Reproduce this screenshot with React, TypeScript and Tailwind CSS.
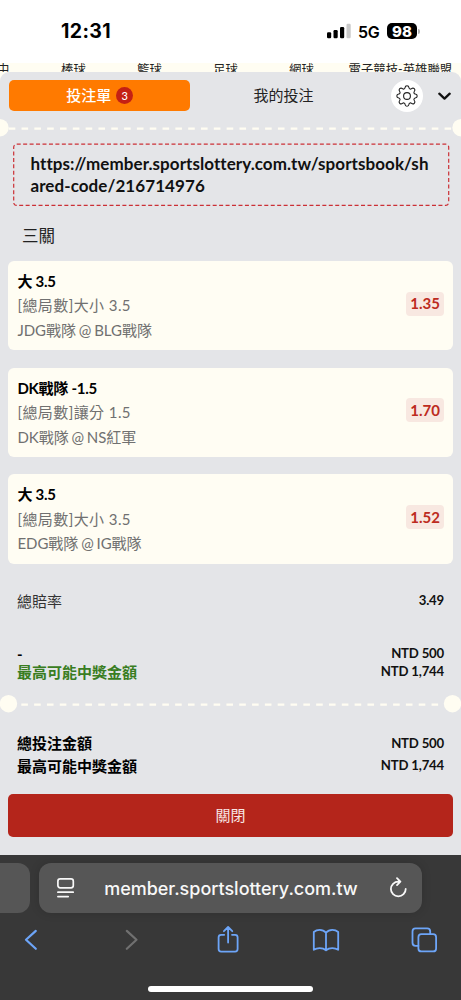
import React from "react";

const leagues = [
  { label: "中", cls: "left-[-3px]" },
  { label: "棒球", cls: "left-[61px]" },
  { label: "籃球", cls: "left-[137px]" },
  { label: "足球", cls: "left-[213px]" },
  { label: "網球", cls: "left-[289px]" },
  { label: "電子競技-英雄聯盟", cls: "left-[348.5px]" },
];

const bets = [
  { pick: "大 3.5", market: "[總局數]大小 3.5", match: "JDG戰隊 @ BLG戰隊", odds: "1.35" },
  { pick: "DK戰隊 -1.5", market: "[總局數]讓分 1.5", match: "DK戰隊 @ NS紅軍", odds: "1.70" },
  { pick: "大 3.5", market: "[總局數]大小 3.5", match: "EDG戰隊 @ IG戰隊", odds: "1.52" },
];

function StatusBar() {
  return (
    <div className="flex h-[63px] items-start bg-white pt-[20px] font-['Inter',sans-serif] text-black">
      <div className="ml-[61px] mt-[-1px] w-[266px] text-[19.5px] font-bold leading-[24px] tracking-[0.35px]">12:31</div>
      <svg className="mt-[3px]" width="24" height="16" viewBox="0 0 24 16">
        <rect x="0" y="9.3" width="4.2" height="6" rx="1.2" />
        <rect x="6.5" y="7" width="4.2" height="8.3" rx="1.2" />
        <rect x="13" y="4" width="4.2" height="11.3" rx="1.2" />
        <rect x="19.5" y="0.8" width="4.2" height="14.5" rx="1.2" fill="#c9c9c9" />
      </svg>
      <div className="ml-[7px] w-[22px] whitespace-nowrap text-[16px] font-semibold leading-[24px] tracking-[-0.2px]">5G</div>
      <div className="ml-[7px] mt-[3px] flex h-[16px] w-[30px] items-center justify-center rounded-[5px] bg-black text-[15px] font-extrabold leading-none text-white">98</div>
      <div className="ml-[1px] mt-[9px] h-[5px] w-[1.5px] rounded-r bg-[#b5b5b5]" />
    </div>
  );
}

function Divider({ inset }: { inset: boolean }) {
  const left = inset ? 8.5 : 0;
  return (
    <svg className="block" width="461" height="18" viewBox="0 0 461 18">
      <line x1={inset ? 21.3 : 8.7} x2={inset ? 440 : 453} y1="9.7" y2="9.7" stroke="#fffdf2" strokeWidth="2.2" strokeDasharray="6.6 6.22" />
      <circle cx={left} cy="8.7" r="8.7" fill="#fffdf2" />
      <circle cx={461 - left} cy="8.7" r="8.7" fill="#fffdf2" />
    </svg>
  );
}

function GearIcon() {
  return (
    <svg width="22" height="22" viewBox="0 0 22 22" fill="none" stroke="#222" strokeWidth="1.1" strokeLinejoin="round">
      <path d="M9 2.8Q9.2 .8 11 .8Q12.8 .8 13 2.8Q13.1 3.7 14 4Q14.8 4.3 15.5 3.7Q17 2.4 18.3 3.7Q19.6 5 18.3 6.5Q17.7 7.2 18 8Q18.3 8.9 19.2 9Q21.2 9.2 21.2 11Q21.2 12.8 19.2 13Q18.3 13.1 18 14Q17.7 14.8 18.3 15.5Q19.6 17 18.3 18.3Q17 19.6 15.5 18.3Q14.8 17.7 14 18Q13.1 18.3 13 19.2Q12.8 21.2 11 21.2Q9.2 21.2 9 19.2Q8.9 18.3 8 18Q7.2 17.7 6.5 18.3Q5 19.6 3.7 18.3Q2.4 17 3.7 15.5Q4.3 14.8 4 14Q3.7 13.1 2.8 13Q.8 12.8 .8 11Q.8 9.2 2.8 9Q3.7 8.9 4 8Q4.3 7.2 3.7 6.5Q2.4 5 3.7 3.7Q5 2.4 6.5 3.7Q7.2 4.3 8 4Q8.9 3.7 9 2.8Z" />
      <circle cx="11" cy="11" r="3.4" />
    </svg>
  );
}

function BetCard({ bet }: { bet: (typeof bets)[number] }) {
  return (
    <div className="flex h-[89.4px] items-center justify-between rounded-[6px] bg-[#fffdf3] pl-[9px] pr-[8.5px]">
      <div className="whitespace-nowrap text-[15px] leading-[24.5px] text-[#707070]">
        <div className="font-bold tracking-[-0.25px] text-black">{bet.pick}</div>
        <div className="tracking-[0.42px]">{bet.market}</div>
        <div className="tracking-[-0.02px] [word-spacing:-1px]">{bet.match}</div>
      </div>
      <div className="mt-[-4px] flex h-[24px] w-[38px] items-center justify-center rounded-[4px] bg-[#f8e8e1] text-[15px] font-bold text-[#bd2b20]">{bet.odds}</div>
    </div>
  );
}

function Row({ label, value, cls }: { label: string; value: string; cls: string }) {
  return (
    <div className={"flex items-center justify-between pl-[17px] pr-[17px] " + cls}>
      <span>{label}</span>
      <span className="text-[13.2px] font-bold tracking-[-0.2px] text-[#111]">{value}</span>
    </div>
  );
}

function Browser() {
  return (
    <div className="h-[145px] bg-[#383838] pt-[8px]">
      <div className="flex h-[50px] gap-[9px]">
        <div className="w-[30px] rounded-r-[12px] bg-[#565656]" />
        <div className="flex w-[383px] items-center rounded-[12px] bg-[#565656] text-[#f8f8f8] shadow-[0_0_10px_rgba(0,0,0,0.15)]">
          <svg className="ml-[18px]" width="18" height="22" viewBox="0 0 18 22" fill="none" stroke="currentColor" strokeWidth="1.7" strokeLinecap="round">
            <rect x="0.9" y="1.9" width="15.4" height="9" rx="2.3" />
            <path d="M.9 15.2H16.2M.9 19.6H11.2" />
          </svg>
          <div className="ml-[29px] mt-[2px] w-[254px] whitespace-nowrap text-center font-['Inter',sans-serif] text-[18px] font-medium leading-[24px] tracking-[-0.02px]">member.sportslottery.com.tw</div>
          <svg className="ml-[31px]" width="20" height="22" viewBox="0 0 20 22" fill="none" stroke="currentColor" strokeWidth="1.8" strokeLinecap="round" strokeLinejoin="round">
            <path d="M10.8 4.6H9.3A7.4 7.4 0 1 0 16.7 12M8 1.2L11.4 4.6L8 8.1" />
          </svg>
        </div>
      </div>
      <div className="mt-[12px] flex h-[30px] text-[#6da5f8]">
        <svg width="461" height="30" viewBox="0 0 461 30" fill="none" stroke="currentColor" strokeWidth="1.8" strokeLinecap="round" strokeLinejoin="round">
          <path d="M35.8 5.9L26 14.8L35.8 23.8" strokeWidth="2.2" />
          <path d="M126.8 5.9L136.5 14.8L126.8 23.8" stroke="#707070" strokeWidth="2.2" />
          <path d="M224.2 9.8H221.1Q218.6 9.8 218.6 12.3V24.1Q218.6 26.6 221.1 26.6H235.1Q237.6 26.6 237.6 24.1V12.3Q237.6 9.8 235.1 9.8H232M228.1 17.5V2.3M223.9 6.2L228.1 2L232.3 6.2" />
          <path d="M326 7.6Q323.5 4.8 319.7 4.8Q316.3 4.8 313.8 7V24.8Q316.3 23.1 319.7 23.1Q323.5 23.1 326 25.2Q328.5 23.1 332.3 23.1Q335.7 23.1 338.2 24.8V7Q335.7 4.8 332.3 4.8Q328.5 4.8 326 7.6ZM326 7.6V25.2" />
          <rect x="418.4" y="9.2" width="17.7" height="17.2" rx="3" />
          <path d="M418.4 20.8H415.5Q412.5 20.8 412.5 17.8V6.4Q412.5 3.4 415.5 3.4H427.2Q430.2 3.4 430.2 6.4V9.2" />
        </svg>
      </div>
      <div className="ml-[148px] mt-[31px] h-[5.5px] w-[165px] rounded-full bg-white" />
    </div>
  );
}

export default function App() {
  return (
    <div className="h-[1000px] w-[461px] overflow-hidden bg-[#fffdf2] font-['Lato','Noto_Sans_CJK_TC',sans-serif] text-black [font-variant-ligatures:none]">
      <StatusBar />
      <div className="relative h-[9px] overflow-hidden">
        {leagues.map((l) => (
          <span key={l.label} className={"absolute top-[-2px] whitespace-nowrap text-[12.4px] leading-[18px] text-[#222] " + l.cls}>{l.label}</span>
        ))}
      </div>
      <div className="h-[783px] rounded-t-[9px] bg-[#e4e5e8]">
        <div className="flex h-[47px] items-center pl-[8.5px] text-[15px]">
          <div className="flex h-[30.5px] w-[181.5px] items-center justify-center gap-[5px] rounded-[5px] bg-[#ff7a00] pl-px font-medium text-white">
            <span>投注單</span>
            <span className="flex size-[17px] items-center justify-center rounded-full bg-[#c42014] text-[11px] leading-none">3</span>
          </div>
          <div className="w-[187px] text-center text-[#222]">我的投注</div>
          <div className="ml-[14px] flex size-[32px] items-center justify-center rounded-full bg-white">
            <GearIcon />
          </div>
          <svg className="ml-[15px] mt-[2px]" width="13" height="9" viewBox="0 0 13 9" fill="none" stroke="#111" strokeWidth="2.3" strokeLinecap="round" strokeLinejoin="round">
            <path d="M1.3 1.7L6.5 6.6L11.7 1.7" />
          </svg>
        </div>
        <Divider inset={false} />
        <div className="relative ml-[12.5px] mt-[6px] h-[64px] w-[437px] pl-[18px] pt-[10px] text-[17px] font-bold leading-[21.5px] tracking-[0.07px] text-[#111]">
          <svg className="absolute left-0 top-0" width="437" height="64" viewBox="0 0 437 64" fill="none" stroke="#cb3036" strokeWidth="1.2" strokeDasharray="4 2.45">
            <rect x="0.7" y="1.2" width="435" height="61.2" rx="3" />
          </svg>
          <div className="whitespace-nowrap">https://member.sportslottery.com.tw/sportsbook/sh</div>
          <div className="whitespace-nowrap">ared-code/216714976</div>
        </div>
        <div className="ml-[22px] mt-[16px] h-[38px] text-[16.5px] leading-[26px] text-[#222]">三關</div>
        <div className="mx-[8.4px] flex flex-col gap-[17.2px]">
          {bets.map((b, i) => (
            <BetCard key={i} bet={b} />
          ))}
        </div>
        <Row label="總賠率" value="3.49" cls="mt-[25.4px] h-[24px] text-[15px] text-[#333]" />
        <Row label="-" value="NTD 500" cls="mt-[32px] h-[18px] text-[15px] font-bold" />
        <Row label="最高可能中獎金額" value="NTD 1,744" cls="h-[18px] text-[15px] font-bold text-[#397d22]" />
        <div className="mt-[14px]">
          <Divider inset />
        </div>
        <Row label="總投注金額" value="NTD 500" cls="mt-[19px] h-[23px] text-[15px] font-bold" />
        <Row label="最高可能中獎金額" value="NTD 1,744" cls="h-[22px] text-[15px] font-bold" />
        <div className="mx-[8.4px] mt-[17px] flex h-[43px] items-center justify-center rounded-[5px] bg-[#b4251b] text-[15px] text-[#f8e6e4]">關閉</div>
      </div>
      <Browser />
    </div>
  );
}
